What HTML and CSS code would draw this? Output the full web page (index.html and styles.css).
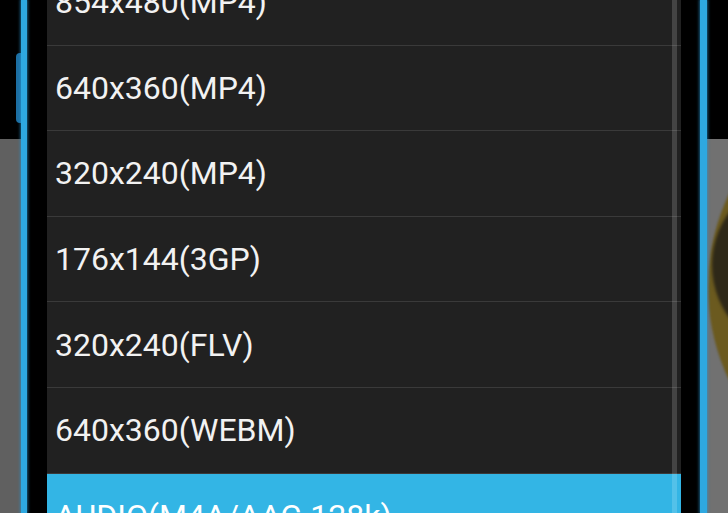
FILE: index.html
```html
<!DOCTYPE html>
<html>
<head>
<meta charset="utf-8">
<link rel="stylesheet" href="styles.css">
</head>
<body>
<div class="screen">
  <div class="side side-left">
    <div class="strip">
      <div class="strip-top"></div>
      <div class="strip-bottom"></div>
      <div class="tab"></div>
    </div>
    <div class="glow"></div>
    <div class="gap"></div>
  </div>
  <div class="dialog">
    <ul class="list">
      <li class="item">854x480(MP4)</li>
      <li class="item">640x360(MP4)</li>
      <li class="item">320x240(MP4)</li>
      <li class="item">176x144(3GP)</li>
      <li class="item">320x240(FLV)</li>
      <li class="item">640x360(WEBM)</li>
      <li class="item selected">AUDIO(M4A/AAC-128k)</li>
    </ul>
    <div class="scrollbar"></div>
  </div>
  <div class="side side-right">
    <div class="gap"></div>
    <div class="glow"></div>
    <div class="strip">
      <div class="strip-top"></div>
      <div class="strip-bottom"></div>
      <div class="disc"></div>
      <div class="disc-inner"></div>
    </div>
  </div>
</div>
</body>
</html>
```
FILE: styles.css
```css
html, body {
  margin: 0;
  padding: 0;
  background: #000;
}
.screen {
  width: 728px;
  height: 513px;
  display: flex;
  overflow: hidden;
  font-family: Roboto, "Noto Sans", sans-serif;
}
.side {
  display: flex;
  flex: none;
}
.side-left { width: 47px; }
.side-right { width: 47px; }
.strip {
  position: relative;
  display: flex;
  flex-direction: column;
  overflow: hidden;
}
.side-left .strip { width: 21px; }
.side-right .strip { width: 21px; }
.strip-top {
  height: 139px;
  background: #000;
}
.strip-bottom {
  flex: 1;
  background: #606060;
}
.side-right .strip-bottom { background: #717171; }
.glow {
  width: 6px;
  background: #2ea8e0;
  box-shadow: 0 0 3px 1px rgba(40, 150, 210, 0.6);
  position: relative;
  z-index: 2;
}
.side-right .glow { width: 7px; }
.gap {
  flex: 1;
  background: #000;
}
.tab {
  position: absolute;
  left: 16px;
  top: 53px;
  width: 10px;
  height: 70px;
  border-radius: 4px;
  background: #1d6fa3;
}
.disc {
  position: absolute;
  left: 1px;
  top: 70px;
  width: 434px;
  height: 434px;
  border-radius: 50%;
  background: #6b5a1f;
  filter: blur(1px);
}
.disc-inner {
  position: absolute;
  left: 5px;
  top: 175px;
  width: 180px;
  height: 180px;
  border-radius: 50%;
  background: #2e2818;
  filter: blur(1.5px);
}
.dialog {
  position: relative;
  width: 634px;
  flex: none;
  background: #212121;
}
.list {
  list-style: none;
  margin: -40px 0 0 0;
  padding: 0;
}
.item {
  height: 84.6px;
  display: flex;
  align-items: center;
  padding-left: 8px;
  font-size: 32px;
  color: #f2f2f2;
  border-bottom: 1px solid #3a3a3a;
  white-space: nowrap;
}
.item.selected {
  background: #33b5e5;
  border-bottom: none;
  color: #fff;
}
.scrollbar {
  position: absolute;
  right: 4px;
  top: 0;
  bottom: 0;
  width: 5px;
  background: rgba(255, 255, 255, 0.16);
}
```
